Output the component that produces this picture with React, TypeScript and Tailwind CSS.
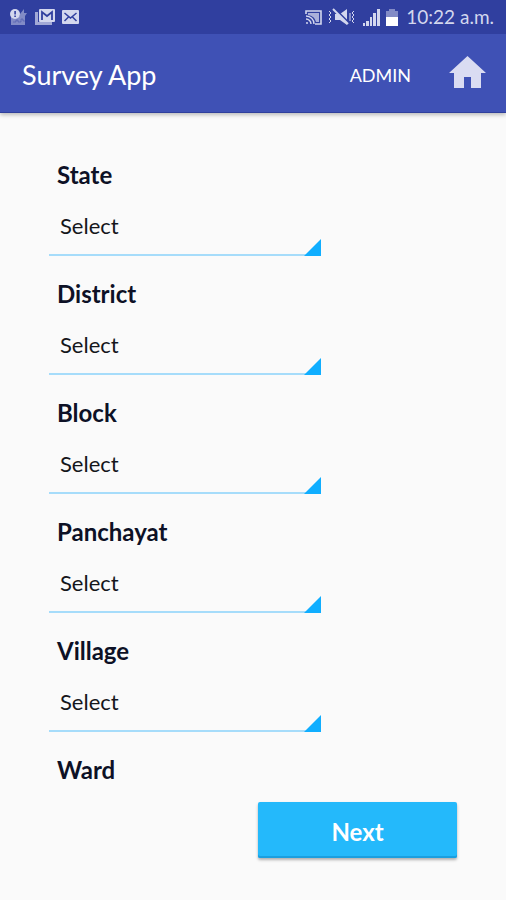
import { useState } from "react";

type FieldProps = {
  id: string;
  label: string;
  value: string;
  onChange: (id: string, value: string) => void;
};

const fields = [
  { id: "state", label: "State" },
  { id: "district", label: "District" },
  { id: "block", label: "Block" },
  { id: "panchayat", label: "Panchayat" },
  { id: "village", label: "Village" },
];

const StatusBar = () => {
  return (
    <div className="flex h-[34px] items-center justify-between bg-[#303f9f] pl-[10px] pr-3 text-[#d3d7ee]">
      <div className="flex items-center gap-[7px]">
        <svg width="18" height="18" viewBox="0 0 18 18" fill="currentColor">
          <path d="M1 8h10v9H1z M10 6l4-5v4h3l-2 3v9h-5z" opacity="0.5" />
          <circle cx="5" cy="6" r="5" />
          <path d="M4.3 3h1.6v3.6H4.3z M4.3 7.4h1.6V9H4.3z" fill="#303f9f" />
          <path d="M3 14h3v-2h2v2h3v-3h2v2h2" fill="none" stroke="#303f9f" opacity="0.4" />
        </svg>
        <svg width="20" height="18" viewBox="0 0 20 18" fill="currentColor">
          <path d="M0 4h3v10h14v3H0z" opacity="0.7" />
          <rect x="4" y="1" width="16" height="13" rx="1" />
          <path d="M7 12V4l5 4 5-4v8" fill="none" stroke="#303f9f" strokeWidth="1.8" />
        </svg>
        <svg width="17" height="14" viewBox="0 0 17 14">
          <rect width="17" height="14" rx="1" fill="currentColor" />
          <path d="M2.5 3l6 5 6-5M2.5 11l4-4M14.5 11l-4-4" fill="none" stroke="#303f9f" strokeWidth="1.5" />
        </svg>
      </div>
      <div className="flex items-center">
        <svg width="17" height="15" viewBox="0 0 17 15" fill="none" stroke="currentColor">
          <path d="M1 4V1h15v13h-6" strokeWidth="1.6" />
          <path d="M3 3h11v9h-3A9 8 0 0 0 3 5z" fill="currentColor" stroke="none" opacity="0.75" />
          <path d="M1 6a8 8 0 0 1 8 8M1 9a5 5 0 0 1 5 5" strokeWidth="1.4" />
          <circle cx="2" cy="13" r="1" fill="currentColor" stroke="none" />
        </svg>
        <svg className="ml-[6px]" width="27" height="18" viewBox="0 0 27 18" fill="none" stroke="currentColor">
          <path d="M1 3l2 2-2 2 2 2-2 2 2 2-2 2M26 3l-2 2 2 2-2 2 2 2-2 2 2 2M22 5v8" />
          <path d="M7 6h5l7-5v16l-7-5H7z" fill="currentColor" stroke="none" />
          <path d="M7 1l14 14" stroke="#303f9f" strokeWidth="2" />
          <path d="M5 1l15 15" strokeWidth="2" />
        </svg>
        <svg className="ml-2" width="17" height="17" viewBox="0 0 17 17" fill="currentColor">
          <path d="M0 14h2v3H0zM3 12h3v5H3z M7 8h2v9H7z M10 4h3v13h-3z M14 0h3v17h-3z" />
        </svg>
        <svg className="ml-[6px]" width="12" height="17" viewBox="0 0 12 17" fill="currentColor">
          <path d="M0 2h3V0h6v2h3v6H0z" opacity="0.5" />
          <path d="M0 8h12v9H0z" fill="#ffffff" />
        </svg>
        <span className="ml-2 text-[19px] leading-6">10:22 a.m.</span>
      </div>
    </div>
  );
};

const SelectField = ({ id, label, value, onChange }: FieldProps) => {
  return (
    <div>
      <label htmlFor={id} className="block pl-2 text-2xl leading-8 font-bold text-[#0d1126]">
        {label}
      </label>
      <div className="relative mt-[6px] w-2/3">
        <select
          id={id}
          value={value}
          onChange={(e) => onChange(id, e.target.value)}
          className="block h-[59px] w-full appearance-none border-b-2 border-[#a6dcfa] bg-transparent pl-[11px] text-[22px] text-[#15161a] outline-none"
        >
          <option value="">Select</option>
        </select>
        <svg className="pointer-events-none absolute right-0 bottom-0" width="17" height="17" viewBox="0 0 17 17">
          <path d="M17 0v17H0z" fill="#10aeff" />
        </svg>
      </div>
    </div>
  );
};

const App = () => {
  const [values, setValues] = useState<Record<string, string>>({});

  const handleChange = (id: string, value: string) => {
    setValues((prev) => ({ ...prev, [id]: value }));
  };

  return (
    <div className="min-h-screen bg-[#fafafa] font-['Lato',sans-serif]">
      <header className="border-b border-[#2f3f9c] bg-[#3f51b5] shadow-[0_2px_4px_rgba(0,0,0,0.25)]">
        <StatusBar />
        <div className="flex h-[78px] items-center pt-1 pr-5 pl-[22px] text-white">
          <h1 className="flex-1 text-[27px] leading-8">Survey App</h1>
          <button type="button" className="text-lg leading-6">ADMIN</button>
          <button type="button" aria-label="Home" className="ml-[38px]">
            <svg width="37" height="38" viewBox="0 0 37 38" fill="#dadcf2">
              <path d="M18.5 0L37 17h-5v15H22V21h-7v11H5V17H0z" />
            </svg>
          </button>
        </div>
      </header>

      <main className="px-[49px] pt-[46px] pb-10">
        <form onSubmit={(e) => e.preventDefault()}>
          <div className="space-y-[22px]">
            {fields.map((field) => (
              <SelectField
                key={field.id}
                id={field.id}
                label={field.label}
                value={values[field.id] ?? ""}
                onChange={handleChange}
              />
            ))}
            <h2 className="pl-2 text-2xl leading-8 font-bold text-[#0d1126]">Ward</h2>
          </div>
          <div className="mt-4 flex justify-end">
            <button
              type="submit"
              className="h-14 w-[199px] rounded-xs bg-[#24b9fb] pt-1 text-2xl font-bold text-white shadow-[inset_0_-2px_0_#1a9fdf,0_2px_3px_rgba(0,0,0,0.3)]"
            >
              Next
            </button>
          </div>
        </form>
      </main>
    </div>
  );
};

export default App;
